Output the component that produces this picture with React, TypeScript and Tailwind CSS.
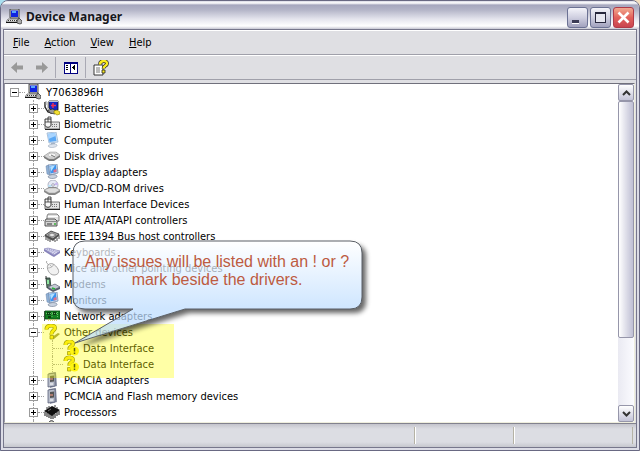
import type { ReactNode } from "react";

type IconName =
  | "root" | "battery" | "hid" | "monitor" | "disk" | "display" | "cd" | "ide" | "firewire"
  | "keyboard" | "mouse" | "modem" | "network" | "unknown" | "warning" | "pcmcia" | "cpu" | "sound";

const drawings: Record<IconName, ReactNode> = {
  root: (
    <>
      <path d="M4 0h9v9H4z" fill="#d4d4d4" stroke="#222" strokeWidth="0.8" />
      <path d="M5 1.500h7V8H5z" fill="#1024e0" />
      <path d="M6 2h4v2H6z" fill="#5aa8ff" />
      <path d="M2 10h10l1 3H0z" fill="#e8e8e8" stroke="#555" strokeWidth="0.7" />
      <path d="M2 11.500h9" stroke="#333" strokeDasharray="1 1" />
      <path d="M0 13.500h13" stroke="#111" />
      <path d="M11 12l2-3 3 3v2l-2 1-3-1z" fill="#aaa" stroke="#222" strokeWidth="0.7" />
    </>
  ),
  battery: (
    <>
      <path d="M1 2v5l3 5 4 1" stroke="#222" strokeWidth="1.4" fill="none" />
      <path d="M2 1v4M4 2v7" stroke="#999" />
      <path d="M5 1h9v9l-6 1-3-3z" fill="#1428c8" stroke="#111" strokeWidth="0.8" />
      <path d="M5 1h9v1H5z" fill="#b8c4dd" />
      <path d="M9 3v5M7 5.5h5" stroke="#f03050" strokeWidth="1.4" />
      <path d="M4 10l5-1 4 3-2 2-5-1z" fill="#999" stroke="#222" strokeWidth="0.7" />
      <path d="M10 11l3-1 3 2v2l-3 1-3-2z" fill="#f3df31" stroke="#8a7a00" strokeWidth="0.6" />
    </>
  ),
  hid: (
    <>
      <path d="M6 6h9.500v7H1V9z" fill="#e4e4e4" stroke="#555" strokeWidth="0.8" />
      <path d="M8 8.500h6M8 10.500h6" stroke="#777" strokeDasharray="1 1" />
      <path d="M1 13.500h15" stroke="#222" />
      <path d="M1 3h6v6c0 3-6 3-6 0z" fill="#f6f6f6" stroke="#222" strokeWidth="0.9" />
      <path d="M1 6h6M4 3v3" stroke="#333" strokeWidth="0.8" />
      <path d="M4 3V1h3v2" stroke="#222" strokeWidth="0.8" fill="none" />
    </>
  ),
  monitor: (
    <>
      <path d="M3 1l9-1 2 10-9 1z" fill="#dce9f5" stroke="#98b4d4" strokeWidth="0.8" />
      <path d="M4 2l7-1 1.5 8-7 1z" fill="#5ba8f4" />
      <path d="M4 2l7-1 .5 3-7 3z" fill="#a9d5ff" />
      <path d="M7 11h4v2H7z" fill="#a8b8cc" />
      <path d="M4 14c1-2 8-3 9-1s-7 4-9 1z" fill="#dde4ee" stroke="#9aa8ba" strokeWidth="0.6" />
    </>
  ),
  disk: (
    <>
      <path d="M0 8l6-4h6l4 3v2l-6 4H5L0 10z" fill="#777" />
      <path d="M0 8l6-4h6l4 3-6 4H5z" fill="#d6d6d6" stroke="#999" strokeWidth="0.5" />
      <ellipse cx="8" cy="7" rx="4" ry="2" fill="#f4f4f4" stroke="#aaa" strokeWidth="0.6" />
      <path d="M7 7l4 2" stroke="#777" />
    </>
  ),
  display: (
    <>
      <path d="M4 1l9-1 1 9-8 2z" fill="#cfdcec" stroke="#7891b0" strokeWidth="0.8" />
      <path d="M5.500 2l6.500-1 .5 7-6 1.500z" fill="#3b93ee" />
      <path d="M6 2.500l5-1-4 6z" fill="#b4e0ff" />
      <path d="M9.500 6l3-1v3l-3 .5z" fill="#e0708a" />
      <path d="M2 2l2.500-1 1 10L3 10z" fill="#8fb0d6" stroke="#6884a8" strokeWidth="0.5" />
      <path d="M4 13c1-3 8-3 9-1s-6 4-9 1z" fill="#c9d2df" stroke="#7a879a" strokeWidth="0.7" />
    </>
  ),
  cd: (
    <>
      <circle cx="9" cy="5" r="5" fill="#e6e9f4" stroke="#a2a6b8" strokeWidth="0.8" />
      <path d="M9 5l4-3 1 3z" fill="#c8b6f0" />
      <path d="M9 5L5 8 4 5z" fill="#b8e0f5" />
      <circle cx="9" cy="5" r="1.300" fill="#fff" stroke="#8888a0" strokeWidth="0.7" />
      <path d="M0 10l5-3h7l4 3v2l-5 3H5l-5-3z" fill="#878787" />
      <path d="M0 10l5-2h7l4 2-5 3H5z" fill="#dedede" stroke="#999" strokeWidth="0.5" />
    </>
  ),
  ide: (
    <>
      <path d="M4 2h9l2 2v5H3V4z" fill="#e2e2e2" stroke="#666" strokeWidth="0.8" />
      <path d="M4 4.500h10" stroke="#fff" />
      <path d="M2 7h9l2 2v5H1V9z" fill="#d4d4d4" stroke="#444" strokeWidth="0.9" />
      <path d="M1 9.500h12" stroke="#888" />
      <path d="M3 12h5" stroke="#333" />
      <path d="M10 12h2" stroke="#38b038" strokeWidth="1.400" />
    </>
  ),
  firewire: (
    <>
      <path d="M0 8l7-5 9 4-7 6z" fill="#555" />
      <path d="M1 7l6-4 8 3-6 5z" fill="#a4a4a4" stroke="#333" strokeWidth="0.7" />
      <path d="M4 7l4-2 4 2-4 2z" fill="#e5e5e5" stroke="#555" strokeWidth="0.6" />
      <path d="M2 9v3M4 10v3M6 11v3M11 12v2M13 10v3M15 8v3" stroke="#444" />
    </>
  ),
  keyboard: (
    <>
      <path d="M0 5l4-1 12 3v2l-6 4-2-1L0 7z" fill="#8783bb" />
      <path d="M0 5l4-1 12 3-6 4z" fill="#dcdcf3" stroke="#8d8abb" strokeWidth="0.6" />
      <path d="M3 5l9 4M5 5l9 3M2 6l8 4" stroke="#928fc0" strokeDasharray="1 1" />
    </>
  ),
  mouse: (
    <>
      <path d="M3 1c-2 2 2 3 2 5" stroke="#999" fill="none" />
      <path d="M4 5c3-3 7-1 10 4 2 4-1 6-4 6-5 0-8-7-6-10z" fill="#f1f1f1" stroke="#999" strokeWidth="0.9" />
      <path d="M4 8c2 0 5-1 6-4M6 5l2 2" stroke="#aaa" fill="none" strokeWidth="0.8" />
    </>
  ),
  modem: (
    <>
      <path d="M2 2h4l1 10H3z" fill="#587465" stroke="#263b30" strokeWidth="0.8" />
      <path d="M3 4h2v4H3z" fill="#8fe6a0" />
      <path d="M2 0v3" stroke="#333" />
      <path d="M4 11l7-3 5 3v2l-7 3-5-3z" fill="#555d6c" />
      <path d="M4 11l7-3 5 3-7 3z" fill="#c5c9d4" stroke="#667" strokeWidth="0.6" />
      <path d="M8 12l3 1" stroke="#28b33a" strokeWidth="1.400" />
    </>
  ),
  network: (
    <>
      <path d="M0 3v10" stroke="#333" strokeWidth="1.600" />
      <path d="M1 3h15v8H1z" fill="#148022" stroke="#064a10" strokeWidth="0.8" />
      <path d="M3 4h4v3H3zM9 4h3v3H9zM4 8h3v2H4z" fill="#0b3f13" />
      <path d="M2 5.500h12M8 4v6M13.500 4v6" stroke="#7bd977" strokeWidth="0.8" strokeDasharray="1 1" />
      <path d="M4 12h9" stroke="#dcc545" strokeWidth="1.500" strokeDasharray="1 1" />
    </>
  ),
  unknown: (
    <>
      <path d="M8 13l6-4 2 1-6 5z" fill="#908d48" />
      <path d="M2.500 5.500c0-5 8.500-5 8.500-1.500 0 2.500-4 3-3.500 6.500" fill="none" stroke="#6b6400" strokeWidth="4" />
      <path d="M2.500 5.500c0-5 8.500-5 8.500-1.500 0 2.500-4 3-3.500 6.500" fill="none" stroke="#f7e414" strokeWidth="2.800" />
      <path d="M6 11.500h3.500V15H6z" fill="#f7e414" stroke="#6b6400" strokeWidth="0.7" />
    </>
  ),
  warning: (
    <>
      <path d="M2.500 5c0-4.500 7.500-4.500 7.500-1 0 2.500-4 2-3.500 5.500" fill="none" stroke="#6b6400" strokeWidth="4" />
      <path d="M2.500 5c0-4.500 7.500-4.500 7.500-1 0 2.500-4 2-3.500 5.500" fill="none" stroke="#f7e414" strokeWidth="2.800" />
      <path d="M4.500 11.500H8V15H4.500z" fill="#f7e414" stroke="#6b6400" strokeWidth="0.7" />
      <circle cx="11.500" cy="11" r="4.500" fill="#fff01a" />
      <path d="M11.500 8v3.500M11.500 12.500v1.500" stroke="#111" strokeWidth="1.500" />
    </>
  ),
  pcmcia: (
    <>
      <path d="M5 1l7-1 1 14-7 2z" fill="#8a90a4" />
      <path d="M4 2l7-1v13l-7 1z" fill="#b8bdca" stroke="#596078" strokeWidth="0.8" />
      <path d="M6 4l4-.5v6l-4 .5z" fill="#555" />
      <path d="M6 7h3" stroke="#c98878" strokeWidth="1.500" />
      <path d="M6 12h3" stroke="#fff" />
    </>
  ),
  cpu: (
    <>
      <path d="M0 7l8-5 8 4-8 6z" fill="#111" />
      <path d="M1 8v4M3 9v4M5 10v4M7 11v4M9 11v4M11 10v4M13 8v4M15 7v4" stroke="#111" />
      <path d="M3 5V3M5 4V2M11 3V1M13 5V3" stroke="#333" />
      <path d="M4 7l3-2" stroke="#999" strokeWidth="0.7" />
    </>
  ),
  sound: <path d="M5 3c0-3 5-3 5 0v6H5z" fill="#ddd" stroke="#222" />,
};

function Icon({ name }: { name: IconName }) {
  return (
    <svg viewBox="0 0 16 16" className="size-4 shrink-0" aria-hidden="true">
      {drawings[name]}
    </svg>
  );
}

function Expander({ open = false, line = true, label }: { open?: boolean; line?: boolean; label: string }) {
  const rail = line ? "w-px grow border-l border-dotted border-[#a0a0a0]" : "grow";
  return (
    <span className="flex h-4 w-[9px] shrink-0 flex-col items-center">
      <span className={rail} />
      <button
        aria-label={`${open ? "Collapse" : "Expand"} ${label}`}
        className="flex size-[9px] items-center justify-center border border-[#9a9a9a] bg-white"
      >
        <svg viewBox="0 0 5 5" className="size-[5px]" shapeRendering="crispEdges">
          <path d={open ? "M0 2h5v1H0z" : "M0 2h5v1H0zM2 0h1v5H2z"} fill="#000" />
        </svg>
      </button>
      <span className={rail} />
    </span>
  );
}

function Dots() {
  return <span className="w-[6px] shrink-0 border-t border-dotted border-[#a0a0a0]" />;
}

const categories: { name: string; icon: IconName; children?: string[] }[] = [
  { name: "Batteries", icon: "battery" },
  { name: "Biometric", icon: "hid" },
  { name: "Computer", icon: "monitor" },
  { name: "Disk drives", icon: "disk" },
  { name: "Display adapters", icon: "display" },
  { name: "DVD/CD-ROM drives", icon: "cd" },
  { name: "Human Interface Devices", icon: "hid" },
  { name: "IDE ATA/ATAPI controllers", icon: "ide" },
  { name: "IEEE 1394 Bus host controllers", icon: "firewire" },
  { name: "Keyboards", icon: "keyboard" },
  { name: "Mice and other pointing devices", icon: "mouse" },
  { name: "Modems", icon: "modem" },
  { name: "Monitors", icon: "display" },
  { name: "Network adapters", icon: "network" },
  { name: "Other devices", icon: "unknown", children: ["Data Interface", "Data Interface"] },
  { name: "PCMCIA adapters", icon: "pcmcia" },
  { name: "PCMCIA and Flash memory devices", icon: "pcmcia" },
  { name: "Processors", icon: "cpu" },
  { name: "", icon: "sound" },
];

function Tree() {
  return (
    <ul className="leading-4 whitespace-nowrap">
      <li>
        <div className="flex h-4 items-center pl-[5px]">
          <Expander open line={false} label="Y7063896H" />
          <Dots />
          <Icon name="root" />
          <span className="pt-px pl-[5px]">Y7063896H</span>
        </div>
        <ul>
          {categories.map((c) => (
            <li key={c.name}>
              <div className="flex h-4 items-center pl-6">
                <Expander open={!!c.children} label={c.name} />
                <Dots />
                <Icon name={c.icon} />
                <span className="pt-px pl-1">{c.name}</span>
              </div>
              {c.children && (
                <ul className="ml-7 border-l border-dotted border-[#a0a0a0] pl-[18px]">
                  {c.children.map((child, i) => (
                    <li key={i} className="flex h-4 items-center">
                      <span className="h-4 w-px border-l border-dotted border-[#a0a0a0]" />
                      <span className="w-[10px] border-t border-dotted border-[#a0a0a0]" />
                      <Icon name="warning" />
                      <span className="pt-px pl-1">{child}</span>
                    </li>
                  ))}
                </ul>
              )}
            </li>
          ))}
        </ul>
      </li>
    </ul>
  );
}

const bubble =
  "M18 7H283Q295 7 295 19V63Q295 75 283 75H118L8 109L66 75H18Q6 75 6 63V19Q6 7 18 7Z";

function Callout() {
  return (
    <div className="absolute top-[150px] left-[62px] h-[124px] w-[312px]">
      <svg viewBox="0 0 312 124" className="absolute inset-0 size-full" aria-hidden="true">
        <defs>
          <linearGradient id="bubbleFill" x1="0" y1="7" x2="0" y2="75" gradientUnits="userSpaceOnUse">
            <stop offset="0" stopColor="#ffffff" />
            <stop offset="1" stopColor="#bcdcff" />
          </linearGradient>
          <filter id="bubbleShadow" x="-10%" y="-10%" width="120%" height="130%">
            <feGaussianBlur in="SourceAlpha" stdDeviation="2.5" />
            <feOffset dx="4" dy="4" />
            <feComposite in2="SourceAlpha" operator="out" />
          </filter>
        </defs>
        <path d={bubble} filter="url(#bubbleShadow)" opacity="0.6" />
        <path d={bubble} fill="url(#bubbleFill)" fillOpacity="0.72" stroke="#5a5f66" />
      </svg>
      <p className="relative w-[300px] pt-[19px] text-center font-['Liberation_Sans',Arial,sans-serif] text-[16px] leading-[18px] text-[#bd5b41]">
        Any issues will be listed with an ! or ?<br />mark beside the drivers.
      </p>
    </div>
  );
}

function ScrollButton({ up = false }: { up?: boolean }) {
  return (
    <button
      aria-label={up ? "Scroll up" : "Scroll down"}
      className="flex h-[17px] shrink-0 items-center justify-center rounded-[2px] border border-[#9696aa] bg-linear-to-b from-white to-[#c4c4d8]"
    >
      <svg viewBox="0 0 9 6" className="h-[6px] w-[9px]">
        <path d={up ? "M1 5l3.500-3.500L8 5" : "M1 1l3.500 3.500L8 1"} fill="none" stroke="#333" strokeWidth="2" />
      </svg>
    </button>
  );
}

function CaptionButton({ label, close = false, children }: { label: string; close?: boolean; children: ReactNode }) {
  const tone = close
    ? "border-[#b03a48] from-[#f0a890] via-[#e2615c] to-[#c94450]"
    : "border-[#6c7294] from-[#f4f4fa] via-[#cfcfe0] to-[#a2a2be]";
  return (
    <button
      aria-label={label}
      className={`flex size-[21px] items-center justify-center rounded-[3px] border bg-linear-to-b ${tone}`}
    >
      <svg viewBox="0 0 19 19" className="size-[19px]" shapeRendering={close ? "auto" : "crispEdges"}>
        {children}
      </svg>
    </button>
  );
}

function ToolButton({ label, children }: { label: string; children: ReactNode }) {
  return (
    <button aria-label={label} className="flex h-[22px] w-[23px] items-center justify-center">
      <svg viewBox="0 0 16 16" className="size-4">{children}</svg>
    </button>
  );
}

function Separator() {
  return <span className="mx-[3px] h-[21px] w-px bg-[#a9a9b4]" />;
}

export default function App() {
  return (
    <div className="h-screen bg-linear-to-r from-[#a9dff0] to-[#f3dfc0] font-['DejaVu_Sans_Condensed','DejaVu_Sans',sans-serif] text-[11px] text-black">
      <div className="flex h-full flex-col overflow-hidden rounded-t-[8px] border border-[#696983] bg-[#dcdce6]">
        <header className="flex h-7 shrink-0 items-center bg-[linear-gradient(to_bottom,#d8d8e4_0,#ffffff_2px,#a6a7be_4px,#b4b5c8_9px,#e4e4ed_18px,#ffffff_25px,#c6c6d2_28px)] pr-[5px] pl-[5px]">
          <span className="pt-1"><Icon name="root" /></span>
          <h1 className="grow pt-1 pl-1 font-['Noto_Sans',sans-serif] text-[12px] leading-4 font-bold text-[#17171c]">
            Device Manager
          </h1>
          <div className="flex gap-[2px] pt-[5px]">
            <CaptionButton label="Minimize">
              <path d="M4 13h7v3H4z" fill="#fff" />
              <path d="M4 12h7v3H4z" fill="#3c3c56" />
            </CaptionButton>
            <CaptionButton label="Maximize">
              <path d="M4 4h11v11H4z" fill="#26263c" />
              <path d="M5 6h9v8H5z" fill="#e6e6f0" />
            </CaptionButton>
            <CaptionButton label="Close" close>
              <path d="M4.500 4.500l10 10M14.500 4.500l-10 10" stroke="#fff" strokeWidth="2.600" />
            </CaptionButton>
          </div>
        </header>

        <div className="mx-[2px] mb-[2px] flex min-h-0 grow flex-col border border-[#77778c] bg-[#dfdfe3]">
          <nav className="flex h-[25px] shrink-0 items-center gap-[15px] border-t border-b border-t-white border-b-[#a0a0aa] pt-px pl-[9px]">
            {["File", "Action", "View", "Help"].map((m) => (
              <button key={m} className="leading-4">
                <span className="underline">{m[0]}</span>{m.slice(1)}
              </button>
            ))}
          </nav>

          <div className="flex h-[25px] shrink-0 items-center border-t border-b border-t-white border-b-[#a0a0aa] pl-[2px]">
            <ToolButton label="Back">
              <path d="M1 7.500L7 2v3.500h6v4H7V13z" fill="#999" />
            </ToolButton>
            <ToolButton label="Forward">
              <path d="M15 7.500L9 2v3.500H3v4h6V13z" fill="#999" />
            </ToolButton>
            <Separator />
            <ToolButton label="Show or hide console tree">
              <g shapeRendering="crispEdges">
                <path d="M1 2h14v12H1z" fill="#000080" />
                <path d="M2 4h5v9H2zM8 4h6v9H8z" fill="#fff" />
                <path d="M3 5h2v1H3zM3 7h2v1H3zM3 9h2v1H3zM12 5h-1v1h-1v1H9v1h1v1h1v1h1z" fill="#000" />
              </g>
            </ToolButton>
            <Separator />
            <ToolButton label="Help">
              <path d="M1 5h9v10H1z" fill="#fff" stroke="#222" strokeWidth="0.9" />
              <path d="M3 8h4M3 10h4M3 12h4" stroke="#555" strokeWidth="0.8" />
              <path d="M7 4.500c0-4.500 7-4.500 7-1 0 2.500-3.500 2-3.500 5" fill="none" stroke="#222" strokeWidth="3.800" />
              <path d="M7 4.500c0-4.500 7-4.500 7-1 0 2.500-3.500 2-3.500 5" fill="none" stroke="#fbec20" strokeWidth="2.400" />
              <path d="M9 10h3v3H9z" fill="#fbec20" stroke="#222" strokeWidth="0.8" />
            </ToolButton>
          </div>

          <main className="mt-[3px] mr-px flex min-h-0 grow border border-t-[#70707c] border-r-[#efeedd] border-b-[#efeedd] border-l-[#9a9aa6] bg-white">
            <div className="relative min-w-0 grow overflow-hidden">
              <Tree />
              <div className="absolute top-60 left-[37px] h-[54px] w-[132px] bg-[#ffff00]/35" />
              <Callout />
            </div>
            <div className="flex w-4 shrink-0 flex-col bg-linear-to-r from-[#eaeaf2] to-[#fbfbff]">
              <ScrollButton up />
              <div className="flex min-h-0 grow flex-col">
                <div className="h-[78%] rounded-[2px] border border-[#9696aa] bg-linear-to-r from-white via-[#dedee9] to-[#bfbfd4]" />
              </div>
              <ScrollButton />
            </div>
          </main>

          <footer className="flex h-6 shrink-0 border-t border-[#82828e] bg-[linear-gradient(to_bottom,#c4c4cc,#dcdde3_5px,#dcdde3_18px,#c6c7ce)] py-[3px]">
            <div className="grow" />
            <div className="w-[99px] border-l border-[#b5b2a5] shadow-[inset_1px_0_#fff]" />
            <div className="w-[120px] border-x border-[#b5b2a5] shadow-[inset_1px_0_#fff]" />
            <div className="w-[3px]" />
          </footer>
        </div>
      </div>
    </div>
  );
}
